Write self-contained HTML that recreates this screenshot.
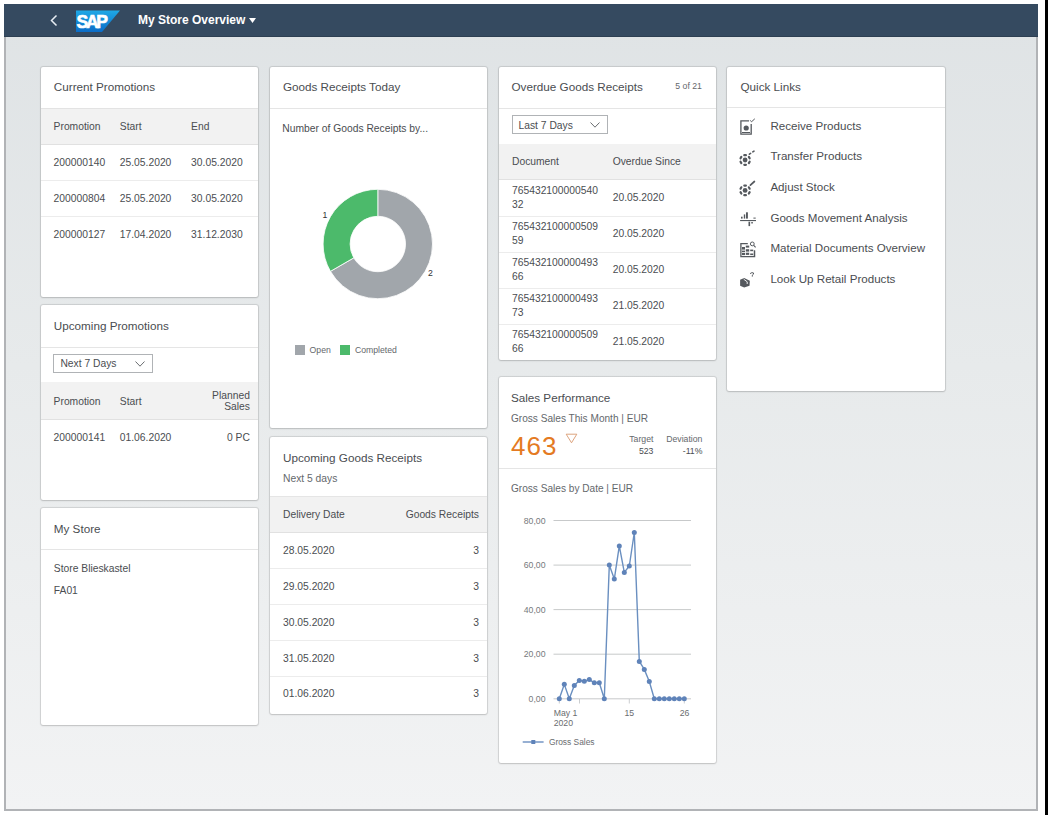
<!DOCTYPE html>
<html><head><meta charset="utf-8"><title>My Store Overview</title>
<style>
html,body{margin:0;padding:0;width:1048px;height:815px;overflow:hidden;background:#fff;}
body{position:relative;font-family:"Liberation Sans",sans-serif;}
.t{position:absolute;line-height:1;white-space:nowrap;}
.card{position:absolute;background:#fff;border-radius:2px;box-shadow:0 0 0 1px rgba(0,0,0,0.08),0 0 3px rgba(0,0,0,0.08),0 1px 2px rgba(0,0,0,0.1);}
</style></head><body>
<div style="position:absolute;left:1045px;top:0px;width:3px;height:815px;background:#000"></div>
<div style="position:absolute;left:4px;top:3.5px;width:1034px;height:807px;background:linear-gradient(#dfe3e5,#e7eaeb 45%,#f2f3f4);border:2px solid #b1b3b6;border-top:none;box-sizing:border-box"></div>
<div style="position:absolute;left:4px;top:3.5px;width:1034px;height:33.5px;background:#354a60;border-bottom:1px solid #2d3f52;box-sizing:border-box"></div>
<svg style="position:absolute;left:49px;top:14px" width="10" height="13" viewBox="0 0 10 13"><path d="M7.5 1.5 L2.5 6.5 L7.5 11.5" fill="none" stroke="#e8eef4" stroke-width="1.5"/></svg>
<svg style="position:absolute;left:76px;top:9.5px" width="45" height="22" viewBox="0 0 45 22">
<defs><linearGradient id="sapg" x1="0" y1="0" x2="0" y2="1"><stop offset="0" stop-color="#1fa9e6"/><stop offset="1" stop-color="#0b6cc7"/></linearGradient></defs>
<path d="M0 0.4 H44 L26 22 H0 Z" fill="url(#sapg)"/>
<text x="0.6" y="17.6" font-family="Liberation Sans" font-weight="bold" font-size="17.5" fill="#fff" stroke="#fff" stroke-width="0.6" letter-spacing="-2.3">SAP</text>
</svg>
<div class="t" style="left:138px;top:14px;font-size:12px;color:#ffffff;font-weight:bold;">My Store Overview</div>
<svg style="position:absolute;left:249px;top:17.5px" width="7" height="5" viewBox="0 0 7 5"><path d="M0 0 H7 L3.5 5 Z" fill="#fff"/></svg>
<div class="card" style="left:40.5px;top:66.5px;width:217px;height:230px"></div>
<div class="t" style="left:53.8px;top:81px;font-size:11.7px;color:#4a4d51;">Current Promotions</div>
<div style="position:absolute;left:40.5px;top:109px;width:217px;height:35px;background:#f2f2f2"></div>
<div style="position:absolute;left:40.5px;top:108px;width:217px;height:1px;background:#e3e3e3"></div>
<div style="position:absolute;left:40.5px;top:144px;width:217px;height:1px;background:#e1e1e1"></div>
<div class="t" style="left:53.6px;top:122px;font-size:10.3px;color:#4a4d51;">Promotion</div>
<div class="t" style="left:119.8px;top:122px;font-size:10.3px;color:#4a4d51;">Start</div>
<div class="t" style="left:191.1px;top:122px;font-size:10.3px;color:#4a4d51;">End</div>
<div class="t" style="left:53.6px;top:158px;font-size:10.3px;color:#4a4d51;">200000140</div>
<div class="t" style="left:119.8px;top:158px;font-size:10.3px;color:#4a4d51;">25.05.2020</div>
<div class="t" style="left:191.1px;top:158px;font-size:10.3px;color:#4a4d51;">30.05.2020</div>
<div style="position:absolute;left:40.5px;top:180px;width:217px;height:1px;background:#ececec"></div>
<div class="t" style="left:53.6px;top:194px;font-size:10.3px;color:#4a4d51;">200000804</div>
<div class="t" style="left:119.8px;top:194px;font-size:10.3px;color:#4a4d51;">25.05.2020</div>
<div class="t" style="left:191.1px;top:194px;font-size:10.3px;color:#4a4d51;">30.05.2020</div>
<div style="position:absolute;left:40.5px;top:216px;width:217px;height:1px;background:#ececec"></div>
<div class="t" style="left:53.6px;top:230px;font-size:10.3px;color:#4a4d51;">200000127</div>
<div class="t" style="left:119.8px;top:230px;font-size:10.3px;color:#4a4d51;">17.04.2020</div>
<div class="t" style="left:191.1px;top:230px;font-size:10.3px;color:#4a4d51;">31.12.2030</div>
<div class="card" style="left:40.5px;top:305px;width:217px;height:194.6px"></div>
<div class="t" style="left:53.8px;top:320px;font-size:11.7px;color:#4a4d51;">Upcoming Promotions</div>
<div style="position:absolute;left:40.5px;top:346.5px;width:217px;height:1px;background:#e5e5e5"></div>
<div style="position:absolute;left:53.2px;top:354.3px;width:99.5px;height:19px;border:1px solid #b0b3b6;box-sizing:border-box;background:#fff"></div>
<div class="t" style="left:60.4px;top:359px;font-size:10.3px;color:#4a4d51;">Next 7 Days</div>
<svg style="position:absolute;left:135px;top:361px" width="10" height="6" viewBox="0 0 10 6"><path d="M0.5 0.5 L5 5.2 L9.5 0.5" fill="none" stroke="#6a6d70" stroke-width="1"/></svg>
<div style="position:absolute;left:40.5px;top:382px;width:217px;height:37.3px;background:#f2f2f2"></div>
<div style="position:absolute;left:40.5px;top:419px;width:217px;height:1px;background:#e1e1e1"></div>
<div class="t" style="left:53.6px;top:397px;font-size:10.3px;color:#4a4d51;">Promotion</div>
<div class="t" style="left:119.8px;top:397px;font-size:10.3px;color:#4a4d51;">Start</div>
<div class="t" style="right:798.1px;text-align:right;top:391px;font-size:10.3px;color:#4a4d51;">Planned</div>
<div class="t" style="right:798.1px;text-align:right;top:402px;font-size:10.3px;color:#4a4d51;">Sales</div>
<div class="t" style="left:53.6px;top:433px;font-size:10.3px;color:#4a4d51;">200000141</div>
<div class="t" style="left:119.8px;top:433px;font-size:10.3px;color:#4a4d51;">01.06.2020</div>
<div class="t" style="right:798.1px;text-align:right;top:433px;font-size:10.3px;color:#4a4d51;">0 PC</div>
<div class="card" style="left:40.5px;top:508px;width:217px;height:217.3px"></div>
<div class="t" style="left:53.8px;top:523px;font-size:11.7px;color:#4a4d51;">My Store</div>
<div style="position:absolute;left:40.5px;top:549.2px;width:217px;height:1px;background:#e5e5e5"></div>
<div class="t" style="left:53.8px;top:564px;font-size:10.3px;color:#4a4d51;">Store Blieskastel</div>
<div class="t" style="left:53.8px;top:586px;font-size:10.3px;color:#4a4d51;">FA01</div>
<div class="card" style="left:269.5px;top:66.5px;width:217px;height:361.6px"></div>
<div class="t" style="left:282.9px;top:81px;font-size:11.7px;color:#4a4d51;">Goods Receipts Today</div>
<div style="position:absolute;left:269.5px;top:107.5px;width:217px;height:1px;background:#e5e5e5"></div>
<div class="t" style="left:282.3px;top:124px;font-size:10.3px;color:#4a4d51;">Number of Goods Receipts by...</div>
<svg style="position:absolute;left:0;top:0" width="1048" height="815"><path d="M377.80 189.30 A54.7 54.7 0 1 1 330.43 271.35 L353.81 257.85 A27.7 27.7 0 1 0 377.80 216.30 Z" fill="#a1a6ab" stroke="#fff" stroke-width="0.8"/><path d="M330.43 271.35 A54.7 54.7 0 0 1 377.80 189.30 L377.80 216.30 A27.7 27.7 0 0 0 353.81 257.85 Z" fill="#4cba6b" stroke="#fff" stroke-width="0.8"/></svg>
<div class="t" style="left:224.8px;width:200px;text-align:center;top:211px;font-size:8.7px;color:#333;">1</div>
<div class="t" style="left:330.4px;width:200px;text-align:center;top:269px;font-size:8.7px;color:#333;">2</div>
<div style="position:absolute;left:294.7px;top:344.7px;width:10px;height:10px;background:#a1a6ab"></div>
<div class="t" style="left:309.6px;top:346px;font-size:8.7px;color:#64686c;">Open</div>
<div style="position:absolute;left:340px;top:344.7px;width:10px;height:10px;background:#4cba6b"></div>
<div class="t" style="left:354.9px;top:346px;font-size:8.7px;color:#64686c;">Completed</div>
<div class="card" style="left:269.5px;top:436.6px;width:217px;height:277.1px"></div>
<div class="t" style="left:283px;top:452px;font-size:11.7px;color:#4a4d51;">Upcoming Goods Receipts</div>
<div class="t" style="left:283px;top:474px;font-size:10.3px;color:#64686c;">Next 5 days</div>
<div style="position:absolute;left:269.5px;top:496px;width:217px;height:1px;background:#e5e5e5"></div>
<div style="position:absolute;left:269.5px;top:496.5px;width:217px;height:35.5px;background:#f2f2f2"></div>
<div style="position:absolute;left:269.5px;top:532px;width:217px;height:1px;background:#e1e1e1"></div>
<div class="t" style="left:283px;top:510px;font-size:10.3px;color:#4a4d51;">Delivery Date</div>
<div class="t" style="right:569.1px;text-align:right;top:510px;font-size:10.3px;color:#4a4d51;">Goods Receipts</div>
<div class="t" style="left:283px;top:546px;font-size:10.3px;color:#4a4d51;">28.05.2020</div>
<div class="t" style="right:569.1px;text-align:right;top:546px;font-size:10.3px;color:#4a4d51;">3</div>
<div style="position:absolute;left:269.5px;top:568.0px;width:217px;height:1px;background:#ececec"></div>
<div class="t" style="left:283px;top:582px;font-size:10.3px;color:#4a4d51;">29.05.2020</div>
<div class="t" style="right:569.1px;text-align:right;top:582px;font-size:10.3px;color:#4a4d51;">3</div>
<div style="position:absolute;left:269.5px;top:603.9px;width:217px;height:1px;background:#ececec"></div>
<div class="t" style="left:283px;top:618px;font-size:10.3px;color:#4a4d51;">30.05.2020</div>
<div class="t" style="right:569.1px;text-align:right;top:618px;font-size:10.3px;color:#4a4d51;">3</div>
<div style="position:absolute;left:269.5px;top:639.8px;width:217px;height:1px;background:#ececec"></div>
<div class="t" style="left:283px;top:654px;font-size:10.3px;color:#4a4d51;">31.05.2020</div>
<div class="t" style="right:569.1px;text-align:right;top:654px;font-size:10.3px;color:#4a4d51;">3</div>
<div style="position:absolute;left:269.5px;top:675.7px;width:217px;height:1px;background:#ececec"></div>
<div class="t" style="left:283px;top:689px;font-size:10.3px;color:#4a4d51;">01.06.2020</div>
<div class="t" style="right:569.1px;text-align:right;top:689px;font-size:10.3px;color:#4a4d51;">3</div>
<div class="card" style="left:498.5px;top:66.5px;width:217px;height:293.5px"></div>
<div class="t" style="left:511.5px;top:81px;font-size:11.7px;color:#4a4d51;">Overdue Goods Receipts</div>
<div class="t" style="right:346.1px;text-align:right;top:82px;font-size:8.7px;color:#64686c;">5 of 21</div>
<div style="position:absolute;left:498.5px;top:107.7px;width:217px;height:1px;background:#e5e5e5"></div>
<div style="position:absolute;left:511.5px;top:115.1px;width:96.2px;height:19px;border:1px solid #b0b3b6;box-sizing:border-box;background:#fff"></div>
<div class="t" style="left:518.5px;top:121px;font-size:10.3px;color:#4a4d51;">Last 7 Days</div>
<svg style="position:absolute;left:590px;top:122px" width="10" height="6" viewBox="0 0 10 6"><path d="M0.5 0.5 L5 5.2 L9.5 0.5" fill="none" stroke="#6a6d70" stroke-width="1"/></svg>
<div style="position:absolute;left:498.5px;top:143.8px;width:217px;height:35.7px;background:#f2f2f2"></div>
<div style="position:absolute;left:498.5px;top:179.3px;width:217px;height:1px;background:#e1e1e1"></div>
<div class="t" style="left:512px;top:157px;font-size:10.3px;color:#4a4d51;">Document</div>
<div class="t" style="left:612.7px;top:157px;font-size:10.3px;color:#4a4d51;">Overdue Since</div>
<div class="t" style="left:512px;top:186px;font-size:10.3px;color:#4a4d51;">765432100000540</div>
<div class="t" style="left:512px;top:200px;font-size:10.3px;color:#4a4d51;">32</div>
<div class="t" style="left:612.7px;top:193px;font-size:10.3px;color:#4a4d51;">20.05.2020</div>
<div style="position:absolute;left:498.5px;top:215.8px;width:217px;height:1px;background:#ececec"></div>
<div class="t" style="left:512px;top:222px;font-size:10.3px;color:#4a4d51;">765432100000509</div>
<div class="t" style="left:512px;top:236px;font-size:10.3px;color:#4a4d51;">59</div>
<div class="t" style="left:612.7px;top:229px;font-size:10.3px;color:#4a4d51;">20.05.2020</div>
<div style="position:absolute;left:498.5px;top:251.8px;width:217px;height:1px;background:#ececec"></div>
<div class="t" style="left:512px;top:258px;font-size:10.3px;color:#4a4d51;">765432100000493</div>
<div class="t" style="left:512px;top:272px;font-size:10.3px;color:#4a4d51;">66</div>
<div class="t" style="left:612.7px;top:265px;font-size:10.3px;color:#4a4d51;">20.05.2020</div>
<div style="position:absolute;left:498.5px;top:287.8px;width:217px;height:1px;background:#ececec"></div>
<div class="t" style="left:512px;top:294px;font-size:10.3px;color:#4a4d51;">765432100000493</div>
<div class="t" style="left:512px;top:308px;font-size:10.3px;color:#4a4d51;">73</div>
<div class="t" style="left:612.7px;top:301px;font-size:10.3px;color:#4a4d51;">21.05.2020</div>
<div style="position:absolute;left:498.5px;top:323.8px;width:217px;height:1px;background:#ececec"></div>
<div class="t" style="left:512px;top:330px;font-size:10.3px;color:#4a4d51;">765432100000509</div>
<div class="t" style="left:512px;top:344px;font-size:10.3px;color:#4a4d51;">66</div>
<div class="t" style="left:612.7px;top:337px;font-size:10.3px;color:#4a4d51;">21.05.2020</div>
<div class="card" style="left:498.5px;top:376.8px;width:217px;height:386.2px"></div>
<div class="t" style="left:510.9px;top:392px;font-size:11.7px;color:#4a4d51;">Sales Performance</div>
<div class="t" style="left:511px;top:414px;font-size:10.1px;color:#64686c;">Gross Sales This Month | EUR</div>
<div class="t" style="left:511px;top:433px;font-size:26px;color:#e47a22;letter-spacing:1.1px">463</div>
<svg style="position:absolute;left:565px;top:432.5px" width="13" height="11" viewBox="0 0 13 11"><path d="M1.2 1.2 H11.8 L6.5 9.8 Z" fill="none" stroke="#d99a70" stroke-width="0.9"/></svg>
<div class="t" style="right:394.6px;text-align:right;top:435px;font-size:8.7px;color:#64686c;">Target</div>
<div class="t" style="right:394.6px;text-align:right;top:447px;font-size:8.7px;color:#4a4d51;">523</div>
<div class="t" style="right:345.6px;text-align:right;top:435px;font-size:8.7px;color:#64686c;">Deviation</div>
<div class="t" style="right:345.6px;text-align:right;top:447px;font-size:8.7px;color:#4a4d51;">-11%</div>
<div style="position:absolute;left:498.5px;top:467.8px;width:217px;height:1px;background:#e5e5e5"></div>
<div class="t" style="left:511px;top:484px;font-size:10.1px;color:#64686c;">Gross Sales by Date | EUR</div>
<svg style="position:absolute;left:0;top:0" width="1048" height="815"><line x1="553.5" x2="691" y1="698.8" y2="698.8" stroke="#b9bbbd" stroke-width="0.8"/><line x1="553.5" x2="691" y1="654.2" y2="654.2" stroke="#b9bbbd" stroke-width="0.8"/><line x1="553.5" x2="691" y1="609.6" y2="609.6" stroke="#b9bbbd" stroke-width="0.8"/><line x1="553.5" x2="691" y1="565.1" y2="565.1" stroke="#b9bbbd" stroke-width="0.8"/><line x1="553.5" x2="691" y1="520.5" y2="520.5" stroke="#b9bbbd" stroke-width="0.8"/></svg>
<div class="t" style="right:502.5px;text-align:right;top:695px;font-size:8.7px;color:#76797c;">0,00</div>
<div class="t" style="right:502.5px;text-align:right;top:650px;font-size:8.7px;color:#76797c;">20,00</div>
<div class="t" style="right:502.5px;text-align:right;top:606px;font-size:8.7px;color:#76797c;">40,00</div>
<div class="t" style="right:502.5px;text-align:right;top:561px;font-size:8.7px;color:#76797c;">60,00</div>
<div class="t" style="right:502.5px;text-align:right;top:517px;font-size:8.7px;color:#76797c;">80,00</div>
<svg style="position:absolute;left:0;top:0" width="1048" height="815"><line x1="559.3" x2="559.3" y1="699" y2="703.5" stroke="#c2c5c8" stroke-width="0.85"/><line x1="579.5" x2="579.5" y1="699" y2="703.5" stroke="#c2c5c8" stroke-width="0.85"/><line x1="629.3" x2="629.3" y1="699" y2="703.5" stroke="#c2c5c8" stroke-width="0.85"/><line x1="684.3" x2="684.3" y1="699" y2="703.5" stroke="#c2c5c8" stroke-width="0.85"/><polyline points="559.3,698.8 564.3,684.3 569.3,698.8 574.3,685.4 579.3,680.5 584.3,681.2 589.3,679.6 594.3,682.8 599.3,682.8 604.3,698.8 609.3,565.1 614.3,579.1 619.3,545.9 624.3,572.4 629.3,566.0 634.3,532.5 639.3,661.4 644.3,669.4 649.3,681.6 654.3,698.8 659.3,698.8 664.3,698.8 669.3,698.8 674.3,698.8 679.3,698.8 684.3,698.8" fill="none" stroke="#6a8fc0" stroke-width="1.4"/><circle cx="559.3" cy="698.8" r="2.5" fill="#5f83b9"/><circle cx="564.3" cy="684.3" r="2.5" fill="#5f83b9"/><circle cx="569.3" cy="698.8" r="2.5" fill="#5f83b9"/><circle cx="574.3" cy="685.4" r="2.5" fill="#5f83b9"/><circle cx="579.3" cy="680.5" r="2.5" fill="#5f83b9"/><circle cx="584.3" cy="681.2" r="2.5" fill="#5f83b9"/><circle cx="589.3" cy="679.6" r="2.5" fill="#5f83b9"/><circle cx="594.3" cy="682.8" r="2.5" fill="#5f83b9"/><circle cx="599.3" cy="682.8" r="2.5" fill="#5f83b9"/><circle cx="604.3" cy="698.8" r="2.5" fill="#5f83b9"/><circle cx="609.3" cy="565.1" r="2.5" fill="#5f83b9"/><circle cx="614.3" cy="579.1" r="2.5" fill="#5f83b9"/><circle cx="619.3" cy="545.9" r="2.5" fill="#5f83b9"/><circle cx="624.3" cy="572.4" r="2.5" fill="#5f83b9"/><circle cx="629.3" cy="566.0" r="2.5" fill="#5f83b9"/><circle cx="634.3" cy="532.5" r="2.5" fill="#5f83b9"/><circle cx="639.3" cy="661.4" r="2.5" fill="#5f83b9"/><circle cx="644.3" cy="669.4" r="2.5" fill="#5f83b9"/><circle cx="649.3" cy="681.6" r="2.5" fill="#5f83b9"/><circle cx="654.3" cy="698.8" r="2.5" fill="#5f83b9"/><circle cx="659.3" cy="698.8" r="2.5" fill="#5f83b9"/><circle cx="664.3" cy="698.8" r="2.5" fill="#5f83b9"/><circle cx="669.3" cy="698.8" r="2.5" fill="#5f83b9"/><circle cx="674.3" cy="698.8" r="2.5" fill="#5f83b9"/><circle cx="679.3" cy="698.8" r="2.5" fill="#5f83b9"/><circle cx="684.3" cy="698.8" r="2.5" fill="#5f83b9"/><line x1="522.7" x2="543.6" y1="742" y2="742" stroke="#6a8fc0" stroke-width="1.4"/><rect x="531.3" y="740" width="4" height="4" fill="#5f83b9"/></svg>
<div class="t" style="left:553.7px;top:709px;font-size:8.7px;color:#6a6d70;">May 1</div>
<div class="t" style="left:553.7px;top:719px;font-size:8.7px;color:#6a6d70;">2020</div>
<div class="t" style="left:529.3px;width:200px;text-align:center;top:709px;font-size:8.7px;color:#6a6d70;">15</div>
<div class="t" style="left:584.6px;width:200px;text-align:center;top:709px;font-size:8.7px;color:#6a6d70;">26</div>
<div class="t" style="left:548.9px;top:738px;font-size:8.4px;color:#6a6d70;">Gross Sales</div>
<div class="card" style="left:727px;top:66.5px;width:217.5px;height:324.3px"></div>
<div class="t" style="left:740.5px;top:81px;font-size:11.7px;color:#4a4d51;">Quick Links</div>
<div style="position:absolute;left:727px;top:107.2px;width:217.5px;height:1px;background:#e5e5e5"></div>
<div class="t" style="left:770.4px;top:120px;font-size:11.6px;color:#4a4d51;">Receive Products</div>
<div class="t" style="left:770.4px;top:150px;font-size:11.6px;color:#4a4d51;">Transfer Products</div>
<div class="t" style="left:770.4px;top:181px;font-size:11.6px;color:#4a4d51;">Adjust Stock</div>
<div class="t" style="left:770.4px;top:212px;font-size:11.6px;color:#4a4d51;">Goods Movement Analysis</div>
<div class="t" style="left:770.4px;top:242px;font-size:11.6px;color:#4a4d51;">Material Documents Overview</div>
<div class="t" style="left:770.4px;top:273px;font-size:11.6px;color:#4a4d51;">Look Up Retail Products</div>
<svg style="position:absolute;left:0;top:0" width="1048" height="815"><path d="M749 120.9 H740.9 V134.1 H751.2 V124" fill="none" stroke="#55595e" stroke-width="1.3"/><path d="M750.2 120.3 L751.5 121.8 L754.8 118.8" fill="none" stroke="#55595e" stroke-width="1"/><circle cx="746.2" cy="128" r="2.6" fill="#55595e"/><path d="M742 132.5 H750" stroke="#55595e" stroke-width="1"/><circle cx="745.1" cy="160" r="2.4" fill="#55595e"/><path d="M744.30 155.20 L745.90 155.20" stroke="#55595e" stroke-width="2.2" stroke-linecap="round"/><path d="M748.86 156.91 L749.66 158.29" stroke="#55595e" stroke-width="2.2" stroke-linecap="round"/><path d="M749.66 161.71 L748.86 163.09" stroke="#55595e" stroke-width="2.2" stroke-linecap="round"/><path d="M745.90 164.80 L744.30 164.80" stroke="#55595e" stroke-width="2.2" stroke-linecap="round"/><path d="M741.34 163.09 L740.54 161.71" stroke="#55595e" stroke-width="2.2" stroke-linecap="round"/><path d="M740.54 158.29 L741.34 156.91" stroke="#55595e" stroke-width="2.2" stroke-linecap="round"/><path d="M749.4 154.2 L750.6 153.4 M752.8 151.9 L754 151.1" stroke="#55595e" stroke-width="1.6" stroke-linecap="round"/><circle cx="745.1" cy="190.4" r="2.4" fill="#55595e"/><path d="M744.30 185.60 L745.90 185.60" stroke="#55595e" stroke-width="2.2" stroke-linecap="round"/><path d="M748.86 187.31 L749.66 188.69" stroke="#55595e" stroke-width="2.2" stroke-linecap="round"/><path d="M749.66 192.11 L748.86 193.49" stroke="#55595e" stroke-width="2.2" stroke-linecap="round"/><path d="M745.90 195.20 L744.30 195.20" stroke="#55595e" stroke-width="2.2" stroke-linecap="round"/><path d="M741.34 193.49 L740.54 192.11" stroke="#55595e" stroke-width="2.2" stroke-linecap="round"/><path d="M740.54 188.69 L741.34 187.31" stroke="#55595e" stroke-width="2.2" stroke-linecap="round"/><path d="M750.4 185.1 L754.4 181.5" stroke="#55595e" stroke-width="1.7" stroke-linecap="round"/><rect x="741" y="216.7" width="1.6" height="1.9" fill="#55595e"/><rect x="743.8" y="214.4" width="1.4" height="4.2" fill="#55595e"/><rect x="746" y="212.3" width="1.9" height="6.3" fill="#55595e"/><rect x="753.4" y="217.6" width="2.3" height="1" fill="#55595e"/><rect x="740.1" y="220" width="15.9" height="1.1" fill="#55595e"/><rect x="748.5" y="221.7" width="1.6" height="4.4" fill="#55595e"/><rect x="751.3" y="222" width="1.5" height="1.5" fill="#55595e"/><path d="M747.8 243.7 H740.9 V256.7 H754.6 V250.4" fill="none" stroke="#55595e" stroke-width="1.3"/><rect x="742" y="247" width="3" height="2.6" fill="#55595e"/><rect x="742" y="250.6" width="3" height="1.5" fill="#55595e"/><rect x="742" y="252.9" width="3" height="2.2" fill="#55595e"/><rect x="745.8" y="245.6" width="3.4" height="2" fill="#55595e"/><rect x="745.8" y="249.2" width="3.4" height="2.4" fill="#55595e"/><rect x="745.8" y="252.7" width="3.4" height="2.2" fill="#55595e"/><rect x="750.2" y="249.6" width="3" height="1.6" fill="#55595e"/><rect x="750.2" y="253.5" width="3" height="1.6" fill="#55595e"/><rect x="753.8" y="250.4" width="1" height="6" fill="#55595e"/><circle cx="752.3" cy="243.9" r="1.9" fill="none" stroke="#55595e" stroke-width="1"/><path d="M753.7 245.4 L755.6 247.4" stroke="#55595e" stroke-width="1.1"/><path d="M740.1 279.8 L744.2 278 L749.8 280.7 L749.5 285.7 L744.2 287.4 L740.1 285.7 Z" fill="#55595e"/><path d="M743.7 279.2 L747.2 281.8 V284" fill="none" stroke="#fff" stroke-width="0.9"/><path d="M750.1 273.6 Q752 272 753.6 273 Q753.8 274.5 752.3 275.2 V276.6" fill="none" stroke="#55595e" stroke-width="1"/></svg>
</body></html>
